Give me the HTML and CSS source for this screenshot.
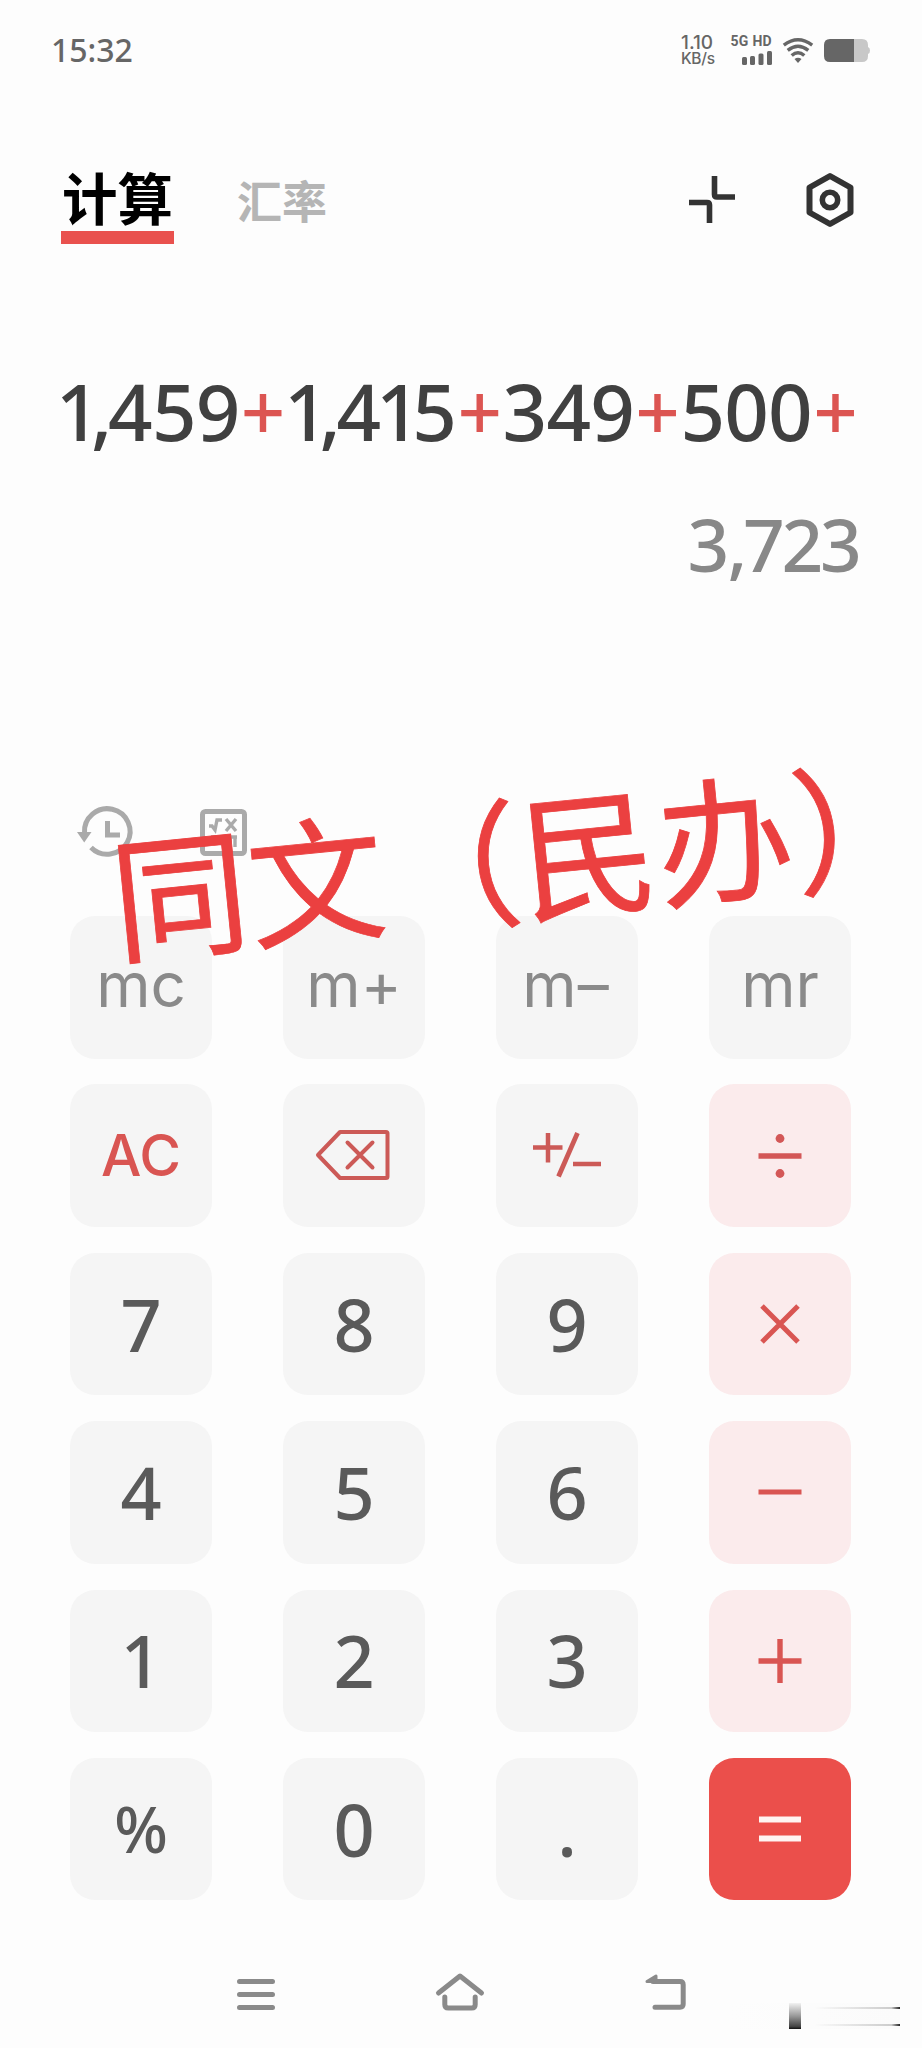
FILE: index.html
```html
<!DOCTYPE html>
<html lang="zh-CN">
<head>
<meta charset="utf-8">
<title>计算</title>
<link rel="stylesheet" href="styles.css">
</head>
<body>
<main class="screen">
  <div class="status">
    <span class="clock">15:32</span>
    <div class="speed"><span class="rate">1.10</span><span class="unit">KB/s</span></div>
    <div class="network">
      <span class="band">5G HD</span>
      <svg class="bars" viewBox="0 0 30 14"><rect x="0" y="6" width="5" height="8" rx="1.5"/><rect x="8" y="5" width="5" height="9" rx="1.5"/><rect x="16.500" y="2.500" width="5" height="11.500" rx="1.500"/><rect x="25" y="0" width="5" height="14" rx="1.500"/></svg>
    </div>
    <svg class="wifi" viewBox="0 0 30 25"><g fill="none" stroke="#666" stroke-width="3.400"><path d="M.8 7.200Q15-3.600 29.200 7.200"/><path d="M4.700 12.400Q15 4.200 25.300 12.400"/><path d="M8.700 17.600Q15 11.800 21.300 17.600"/></g><path d="M11.500 21Q15 18.500 18.500 21L15 25Z" fill="#666"/></svg>
    <svg class="battery" viewBox="0 0 46 23"><path d="M30 0h8q6 0 6 6v2q2 .5 2 3.500t-2 3.500v2q0 6-6 6h-8z" fill="#c8c8c8"/><path d="M6 0h24v23H6q-6 0-6-6V6q0-6 6-6z" fill="#666"/></svg>
  </div>

  <header class="header">
    <span class="tab active">计算</span>
    <span class="tab">汇率</span>
    <svg class="shrink" viewBox="0 0 46 47"><path d="M25.500 0v18.500q0 2.500 2.500 2.500H46M0 26.500h18q2.500 0 2.500 2.500V47" fill="none" stroke="#333" stroke-width="5.600"/></svg>
    <svg class="settings" viewBox="0 0 48 54"><path d="M24 3L44.500 14.500V39.500L24 51L3.500 39.500V14.500Z" fill="none" stroke="#333" stroke-width="6" stroke-linejoin="round"/><circle cx="24" cy="27" r="7.700" fill="none" stroke="#333" stroke-width="5.600"/></svg>
  </header>

  <section class="display">
    <div class="expression"><span class="one">1</span><span class="comma">,</span><span>4</span><span>5</span><span>9</span><span class="op">+</span><span class="one">1</span><span class="comma">,</span><span>4</span><span class="one inner">1</span><span>5</span><span class="op">+</span><span>3</span><span>4</span><span>9</span><span class="op">+</span><span>5</span><span>0</span><span>0</span><span class="op">+</span></div>
    <div class="result"><span>3</span><span class="comma">,</span><span>7</span><span>2</span><span>3</span></div>
  </section>

  <div class="tools">
    <svg class="history" viewBox="0 0 57 52"><g fill="none" stroke="#aaa" stroke-width="5"><path d="M7.500 27A22.800 22.800 0 1 1 14 41.500"/><path d="M30.500 15v14H43"/></g><path d="M0 26h14.500L7.200 36.500Z" fill="#aaa"/></svg>
    <svg class="functions" viewBox="0 0 47 47" fill="none" stroke="#aaa"><rect x="2.500" y="2.500" width="42" height="42" rx="3" stroke-width="5"/><path d="M9 17l3 0 3 4 2-10h5M26 10l10 12M36 10L26 22M11 28h11M11 34h11M26 28h11M30 28v10M35 28v10" stroke-width="3.400"/></svg>
  </div>

  <section class="keys">
    <div class="key memory">mc</div><div class="key memory">m+</div><div class="key memory minus">m–</div><div class="key memory">mr</div>
    <div class="key clear">AC</div>
    <div class="key"><svg class="erase" viewBox="0 0 74 50" fill="none" stroke="#cc5a57" stroke-width="4" stroke-linecap="round" stroke-linejoin="round"><path d="M2 25L24 2H70q1.500 0 1.500 1.500v43q0 1.500-1.500 1.500H24Z"/><path d="M31.500 12.500l25 25M56.500 12.500l-25 25"/></svg></div>
    <div class="key"><svg class="sign" viewBox="0 0 68 44" fill="none" stroke="#cc5a57"><path d="M0 14.500h29.500M15 0v29.500M40 31h28" stroke-width="4.500"/><path d="M44.500 0L25.500 43.500" stroke-width="4.800"/></svg></div>
    <div class="key operator"><svg viewBox="0 0 44 44"><path d="M.5 22h43" stroke="#d35757" stroke-width="5.600"/><circle cx="22" cy="4.500" r="4.400" fill="#d35757"/><circle cx="22" cy="39.500" r="4.400" fill="#d35757"/></svg></div>
    <div class="key">7</div><div class="key">8</div><div class="key">9</div>
    <div class="key operator"><svg viewBox="0 0 44 44"><path d="M4 4l36 36M40 4L4 40" stroke="#d95552" stroke-width="5"/></svg></div>
    <div class="key">4</div><div class="key">5</div><div class="key">6</div>
    <div class="key operator"><svg viewBox="0 0 44 44"><path d="M.5 22h43" stroke="#d95552" stroke-width="5"/></svg></div>
    <div class="key">1</div><div class="key">2</div><div class="key">3</div>
    <div class="key operator"><svg viewBox="0 0 44 44"><path d="M.5 22h43M22 0v44" stroke="#d95552" stroke-width="5.400"/></svg></div>
    <div class="key percent">%</div><div class="key">0</div><div class="key point">.</div>
    <div class="key equals"><svg viewBox="0 0 44 44"><path d="M1 12.500h42M1 31.500h42" stroke="#fff4f2" stroke-width="6"/></svg></div>
  </section>

  <nav class="nav">
    <svg class="menu" viewBox="0 0 38 31"><path d="M2.500 2.500h33M2.500 15.500h33M2.500 28.500h33"/></svg>
    <svg class="home" viewBox="0 0 48 38"><path d="M2.500 20L24 3L45.500 20M8.800 24v7.500q0 3.500 3.500 3.500h23.400q3.500 0 3.500-3.500V24"/></svg>
    <svg class="back" viewBox="0 0 42 37"><path d="M9 8.500h27q3.200 0 3.200 3.200V31q0 3.200-3.200 3.200H11"/><path d="M3 8.500L12 3v5.500z" fill="#8a8a8a" stroke-width="3"/></svg>
  </nav>

  <div class="annotation">同文（民办<span>）</span></div>
  <div class="smudge"><i></i></div>
</main>
</body>
</html>
```
FILE: styles.css
```css
* { box-sizing: border-box; }
body { margin: 0; background: #fdfdfd; }
svg { display: block; flex: none; overflow: visible; }
.screen {
  position: relative;
  width: 922px;
  height: 2048px;
  overflow: hidden;
  font-family: "Noto Sans", "Noto Sans CJK SC", sans-serif;
  display: flex;
  flex-direction: column;
}
.status {
  height: 100px;
  padding: 0 52px 0 51px;
  display: flex;
  align-items: center;
  color: #666;
}
.clock { font-size: 32px; font-weight: 500; margin: 0 auto 2px 0; }
.speed { width: 37px; margin-right: 11px; display: flex; flex-direction: column; font-weight: 500; }
.rate { font: 500 19px/16px Inter, sans-serif; }
.unit { font: 500 15.500px/15px Inter, sans-serif; letter-spacing: -.3px; }
.network { width: 43px; margin-right: 11px; display: flex; flex-direction: column; align-items: flex-end; gap: 3px; }
.band { font: 700 14px/13px Roboto, sans-serif; white-space: nowrap; letter-spacing: .3px; }
.bars { width: 30px; height: 14px; fill: #666; }
.wifi { width: 30px; height: 25px; margin-right: 11px; }
.battery { width: 46px; height: 23px; }

.header { height: 160px; padding: 71px 68px 0 61px; display: flex; align-items: flex-start; }
.tab { font: 700 45px/44px "Noto Sans CJK SC", sans-serif; color: #b5b5b5; padding-top: 7px; }
.tab.active {
  width: 113px;
  height: 73px;
  margin-right: 63px;
  padding: 0;
  color: #000;
  font-size: 55.500px;
  line-height: 51px;
  text-align: center;
  border-bottom: 13px solid #e9514e;
  white-space: nowrap;
}
.shrink { width: 46px; height: 47px; margin: 5px 71px 0 auto; }
.settings { width: 48px; height: 54px; margin-top: 2px; }

.display { height: 545px; padding: 98px 58px 0; }
.expression, .result { display: flex; font-weight: 500; }
.expression { font-size: 78px; line-height: 107px; color: #404040; }
.expression span { width: 43.8px; display: flex; justify-content: center; }
.expression .one { width: 32px; padding-left: 8px; }
.expression .inner { padding-left: 3px; }
.expression .comma { width: 18.500px; padding-left: 5px; }
.expression .op { width: 46.500px; color: #dc5552; }
.result { margin: 28px 4px 0 0; font-size: 73px; line-height: 102px; color: #888; justify-content: flex-end; }
.result span { width: 38.500px; display: flex; justify-content: center; }
.result .comma { width: 17px; padding-left: 3px; }

.tools { height: 111px; padding: 0 77px; display: flex; gap: 66px; }
.history { width: 57px; height: 52px; margin-top: 1px; }
.functions { width: 47px; height: 47px; margin-top: 4px; }

.keys {
  width: 781px;
  margin-left: 70px;
  display: grid;
  grid-template-columns: repeat(4, 142px);
  grid-auto-rows: 142.500px;
  justify-content: space-between;
  row-gap: 25.900px;
}
.key {
  background: #f5f5f5;
  border-radius: 25px;
  display: flex;
  align-items: center;
  justify-content: center;
  font-size: 72px;
  font-weight: 500;
  line-height: 98px;
  color: #5a5a5a;
  padding-bottom: 1px;
}
.memory { font: 400 62px/74px Inter, sans-serif; color: #8a8a8a; padding-bottom: 5px; }
.minus { letter-spacing: 1px; padding-right: 2px; }
.clear { font: 500 57px/66px Inter, sans-serif; color: #d95552; padding: 0; }
.percent { font-size: 63px; }
.operator { background: #fbebec; padding: 0; }
.key svg { width: 44px; height: 44px; }
.key .erase { width: 74px; height: 50px; margin-right: 2px; }
.key .sign { width: 68px; height: 44px; margin-right: 1px; }
.equals { background: #eb4f4b; }

.nav { padding: 73px 236px 0 237px; display: flex; justify-content: space-between; }
.nav svg { fill: none; stroke: #8a8a8a; stroke-width: 5; stroke-linecap: round; stroke-linejoin: round; margin-top: 6px; }
.menu { width: 38px; height: 31px; }
.nav .home { width: 48px; height: 38px; margin-top: 0; }
.nav .back { width: 42px; height: 37px; margin-top: 0; }

.annotation {
  position: absolute;
  left: 109px;
  top: 784px;
  font: 400 136.800px/138px "Noto Sans CJK SC", sans-serif;
  color: #eb4040;
  -webkit-text-stroke: .8px #eb4040;
  white-space: nowrap;
  transform-origin: 414px 69px;
  transform: rotate(-5.700deg);
}
.annotation span { display: inline-block; width: .5em; }
.smudge {
  position: absolute;
  left: 729px;
  top: 2003px;
  width: 171px;
  height: 26px;
  padding-left: 60px;
  background:
    linear-gradient(90deg, transparent 50%, #ccc 95%, #222) 0 4px / 100% 2px no-repeat,
    linear-gradient(90deg, transparent 50%, #ccc 95%, #222) 0 21px / 100% 2px no-repeat,
    linear-gradient(90deg, transparent, #fbfbfb);
}
.smudge i { display: block; width: 12px; height: 26px; background: linear-gradient(#f2f2f2, #999 50%, #444 90%, #111); }
```
